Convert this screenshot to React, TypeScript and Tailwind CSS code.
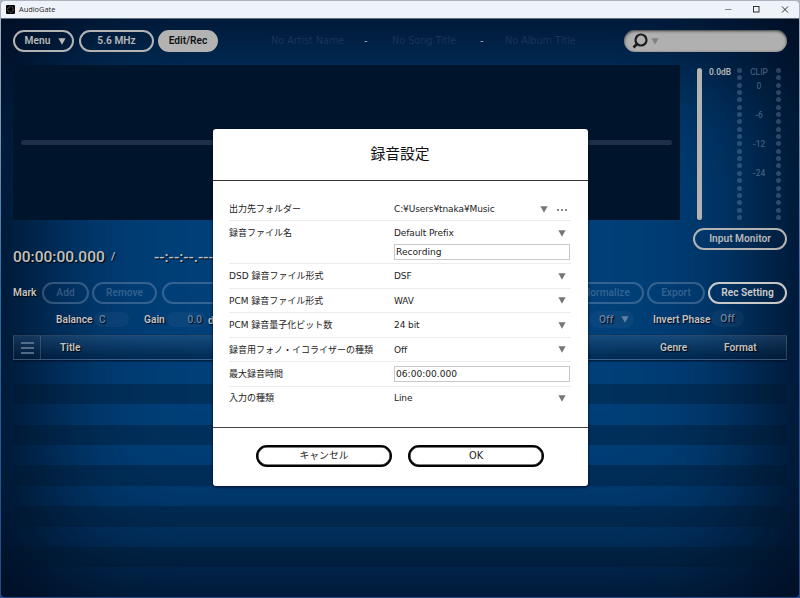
import type { ReactNode } from "react"
import { clsx } from "clsx"

interface PillProps {
  children?: ReactNode
  className?: string
  dim?: boolean
}

interface SettingRow {
  label: string
  value?: string
  input?: string
  browse?: boolean
}

const settings: SettingRow[] = [
  { label: "出力先フォルダー", value: "C:¥Users¥tnaka¥Music", browse: true },
  { label: "録音ファイル名", value: "Default Prefix", input: "Recording" },
  { label: "DSD 録音ファイル形式", value: "DSF" },
  { label: "PCM 録音ファイル形式", value: "WAV" },
  { label: "PCM 録音量子化ビット数", value: "24 bit" },
  { label: "録音用フォノ・イコライザーの種類", value: "Off" },
  { label: "最大録音時間", input: "06:00:00.000" },
  { label: "入力の種類", value: "Line" },
]

const meterLabels = ["0", "-6", "-12", "-24"]

function Triangle({ className }: { className?: string }) {
  return (
    <svg viewBox="0 0 8 7" className={clsx("h-[7px] w-2 shrink-0", className)} fill="currentColor">
      <path d="M0.4 0.3h7.2L4 6.8z" />
    </svg>
  )
}

function Pill({ children, className, dim = false }: PillProps) {
  return (
    <button
      className={clsx(
        "flex h-[22px] shrink-0 items-center justify-center rounded-full border-2 whitespace-nowrap",
        dim ? "border-[#8fa9c6]/35 text-[#7f9cbd]/40" : "border-[#b3b3b3] text-[#b8b8b8]",
        className,
      )}
    >
      {children}
    </button>
  )
}

function TitleBar() {
  return (
    <div className="flex h-[17px] shrink-0 items-center bg-[#eef3fa] pl-[5px] font-['Open_Sans','Noto_Sans',sans-serif] text-[7.4px] font-normal text-[#222]">
      <svg viewBox="0 0 9 9" className="h-[9px] w-[9px]">
        <rect width="9" height="9" rx="1" fill="#080808" />
        <circle cx="4.5" cy="4.5" r="2.8" fill="none" stroke="#8b8b8b" strokeWidth="0.8" strokeDasharray="1.2 0.6" />
      </svg>
      <span className="ml-1">AudioGate</span>
      <svg viewBox="0 0 66 9" className="mr-[9px] ml-auto h-[9px] w-[66px]" fill="none" stroke="#333">
        <path d="M1 4.5h6.500" stroke="#888" />
        <rect x="29.500" y="1.500" width="5.500" height="5.500" />
        <path d="M58 1.500l6 6M64 1.500l-6 6" />
      </svg>
    </div>
  )
}

function Toolbar() {
  return (
    <div className="flex h-[46px] shrink-0 items-start px-3 pt-[11px] text-[10.2px]">
      <Pill className="w-[61px] gap-2 pl-1">
        Menu
        <Triangle />
      </Pill>
      <Pill className="ml-[5px] w-[75px]">5.6 MHz</Pill>
      <Pill className="ml-1 w-[60px] bg-[#b3b3b3] !text-[#111]">Edit/Rec</Pill>
      <div className="ml-[53px] flex h-[22px] items-center font-['DejaVu_Sans',sans-serif] text-[9.8px] font-normal tracking-[-0.1px] whitespace-nowrap text-[#18355a]">
        <span className="w-[93px]">No Artist Name</span>
        <span className="w-[28px] text-[#a5adb5]">-</span>
        <span className="w-[88px]">No Song Title</span>
        <span className="w-[25px] text-[#a5adb5]">-</span>
        <span>No Album Title</span>
      </div>
      <div className="ml-auto flex h-[22px] w-[163px] items-center rounded-full bg-[#b0b0b0] pl-2 shadow-[inset_0_1px_3px_#333]">
        <svg viewBox="0 0 16 16" className="h-4 w-4" fill="none" stroke="#1c1c1c">
          <circle cx="9" cy="7" r="5.500" strokeWidth="2.200" />
          <path d="M5 11L1.500 14.500" strokeWidth="2.600" />
        </svg>
        <Triangle className="ml-[3px] text-[#828282]" />
      </div>
    </div>
  )
}

function MeterDots() {
  return (
    <div className="flex h-[152px] w-[5px] flex-col justify-between">
      {Array.from({ length: 21 }, (_, i) => (
        <span key={i} className="h-[5px] w-[5px] rounded-full bg-[#8fa9c6]/30" />
      ))}
    </div>
  )
}

function Meter() {
  return (
    <div className="flex w-[94px] flex-col">
      <div className="flex h-[163px] pt-[3px] pl-[4px] text-[8.4px] leading-[9px]">
        <div className="h-[152px] w-[5px] rounded-full bg-[#b3b3b3]" />
        <span className="ml-[7px] w-[28px] text-[#b8b8b8]">0.0dB</span>
        <MeterDots />
        <div className="flex w-[34px] flex-col items-center font-medium text-[#8fa9c6]/45">
          <span className="mb-[5px]">CLIP</span>
          {meterLabels.map((label) => (
            <span key={label} className="h-[29px]">
              {label}
            </span>
          ))}
        </div>
        <MeterDots />
      </div>
      <Pill className="w-[94px] text-[10.2px]">Input Monitor</Pill>
    </div>
  )
}

function Deck() {
  return (
    <div className="flex h-[217px] shrink-0 justify-between px-3">
      <div className="flex w-[667px] flex-col">
        <div className="flex h-[155px] shrink-0 items-center bg-[#00142c] px-2">
          <div className="h-[5px] w-full rounded-full bg-[#1b3049]" />
        </div>
        <div className="flex h-[75px] shrink-0 items-center text-[15.500px] font-medium text-[#c2c2c2] [text-shadow:1px_1px_1px_#000]">
          <span className="w-[98px]">00:00:00.000</span>
          <span className="w-[43px] text-[11px]">/</span>
          <span>--:--:--.---</span>
        </div>
      </div>
      <Meter />
    </div>
  )
}

function MarkRow() {
  return (
    <div className="flex h-[22px] shrink-0 items-center px-3 text-[10.2px] text-[#c2c2c2]">
      <span className="w-[29px] [text-shadow:1px_1px_1px_#000]">Mark</span>
      <Pill dim className="w-[47px]">Add</Pill>
      <Pill dim className="ml-[3px] w-[65px]">Remove</Pill>
      <Pill dim className="ml-[5px] w-[80px]" />
      <Pill dim className="ml-auto w-[75px]">Normalize</Pill>
      <Pill dim className="ml-[3px] w-[58px]">Export</Pill>
      <Pill className="ml-[3px] w-[79px] border-[#c8c8c8] text-[#cccccc]">Rec Setting</Pill>
    </div>
  )
}

function OptionRow() {
  return (
    <div className="flex h-[31px] shrink-0 items-center pr-[55px] pl-[55px] text-[10.2px] whitespace-nowrap text-[#c2c2c2] [text-shadow:1px_1px_1px_#001]">
      <span className="w-[38px]">Balance</span>
      <span className="flex h-[15px] w-[35px] items-center rounded-full bg-white/4 pl-[5px] text-[#6381a2]">C</span>
      <span className="ml-[15px] w-[20px]">Gain</span>
      <span className="ml-[3px] flex h-[15px] w-[39px] items-center justify-end rounded-full bg-white/4 pr-1 text-[#6381a2]">
        0.0
      </span>
      <span className="ml-[2px] pt-[3px]">dB</span>
      <span className="ml-auto flex h-[17px] w-[45px] items-center justify-between rounded-full bg-white/4 pr-[5px] pl-[10px] text-[#6381a2]">
        Off
        <Triangle />
      </span>
      <span className="ml-[19px] w-[58px]">Invert Phase</span>
      <span className="mb-[2px] flex h-[17px] w-[33px] items-center justify-center rounded-full bg-white/4 text-[#6381a2]">
        Off
      </span>
    </div>
  )
}

function TrackTable() {
  return (
    <div className="mx-3 flex flex-col">
      <div className="flex h-[25px] items-center border border-[#9fb0c4]/25 bg-gradient-to-b from-[#49688c]/30 to-[#00142d]/50 text-[10.2px] text-[#c2c2c2] shadow-[0_1px_2px_#001025] [text-shadow:1px_1px_1px_#000]">
        <span className="flex h-full w-[27px] items-center justify-center border-r border-[#9fb0c4]/25">
          <svg viewBox="0 0 13 12" className="h-3 w-[13px]" stroke="#6c839c" strokeWidth="1.300">
            <path d="M0 1h13M0 6h13M0 11h13" />
          </svg>
        </span>
        <span className="ml-[19px]">Title</span>
        <span className="ml-auto w-[64px]">Genre</span>
        <span className="w-[62px]">Format</span>
      </div>
      <div className="pt-[3.500px]">
        {Array.from({ length: 10 }, (_, i) => (
          <div key={i} className="h-[20.4px] odd:bg-transparent even:bg-[#001329]/35" />
        ))}
      </div>
    </div>
  )
}

function TextField({ value }: { value: string }) {
  return (
    <input
      readOnly
      value={value}
      className="block h-[16px] w-[176px] border border-[#c8c8c8] bg-white px-[1px] text-[9.1px] text-[#222] outline-none"
    />
  )
}

function RecordingDialog() {
  return (
    <div className="absolute top-[128px] left-[211.500px] flex h-[357px] w-[375px] flex-col rounded-[3px] bg-white font-['DejaVu_Sans','Noto_Sans_CJK_JP',sans-serif] text-[9px] font-normal text-[#222] shadow-[0_1px_3px_#000c26]">
      <h2 className="flex h-[52px] shrink-0 items-center justify-center border-b border-[#333] text-[14.8px] text-[#111]">
        録音設定
      </h2>
      <div className="flex grow flex-col px-[16.500px] pt-4">
        {settings.map((row) => (
          <div
            key={row.label}
            className={clsx(
              "flex border-b border-[#ececec] last:border-transparent",
              row.value && row.input ? "h-[43px]" : "h-[24.45px]",
            )}
          >
            <span className="flex h-[25px] w-[165px] items-center whitespace-nowrap">{row.label}</span>
            <div className="flex grow flex-col">
              {row.value && (
                <div className="flex h-[25px] shrink-0 items-center tracking-[-0.1px]">
                  <span className="grow">{row.value}</span>
                  <Triangle className={clsx("mb-px text-[#777]", row.browse ? "mr-[9px]" : "mr-[5px]")} />
                  {row.browse && (
                    <svg viewBox="0 0 10 2" className="mr-1 h-[2px] w-[10px]" fill="#888">
                      <path d="M0 0h2v2H0zM4 0h2v2H4zM8 0h2v2H8z" />
                    </svg>
                  )}
                </div>
              )}
              {row.input && (
                <div className={row.value ? "-mt-[2px]" : "pt-[4px]"}>
                  <TextField value={row.input} />
                </div>
              )}
            </div>
          </div>
        ))}
      </div>
      <div className="flex h-[59px] shrink-0 justify-center gap-4 border-t border-[#444] pt-[17px] text-[9.8px]">
        <button className="h-[22px] w-[136px] rounded-full border-2 border-black pb-px leading-4 shadow-[inset_0_0_0_0.5px_#000]">
          キャンセル
        </button>
        <button className="h-[22px] w-[136px] rounded-full border-2 border-black pb-px leading-4 shadow-[inset_0_0_0_0.5px_#000]">
          OK
        </button>
      </div>
    </div>
  )
}

export default function App() {
  return (
    <div className="h-[598px] w-[800px] overflow-hidden bg-gradient-to-b from-[#aeb4bd] via-[#2b6aa5] to-[#234a86] p-px font-[Roboto,sans-serif] font-semibold">
      <div className="relative flex h-[596px] w-[798px] flex-col overflow-hidden rounded-[4px]">
        <TitleBar />
        <div className="flex grow flex-col border-t border-[#66707c] bg-[#003f78] shadow-[inset_0_0_130px_30px_#00091a]">
          <Toolbar />
          <Deck />
          <MarkRow />
          <OptionRow />
          <TrackTable />
        </div>
        <RecordingDialog />
      </div>
    </div>
  )
}
